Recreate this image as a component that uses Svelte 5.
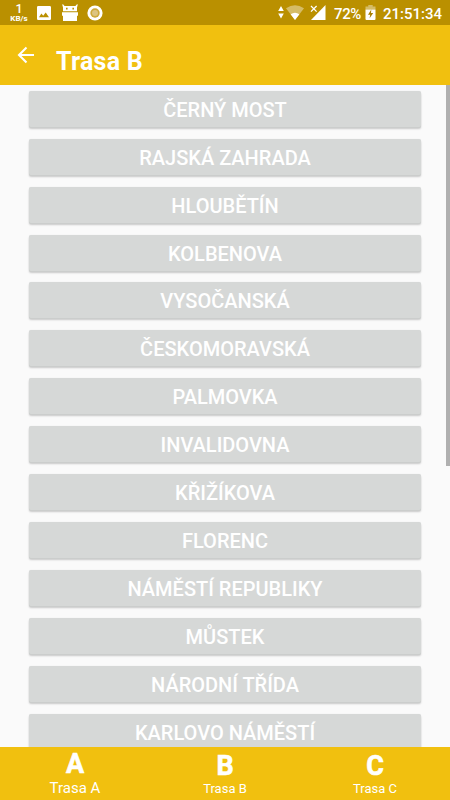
<script>
  const stations = [
    'ČERNÝ MOST', 'RAJSKÁ ZAHRADA', 'HLOUBĚTÍN', 'KOLBENOVA', 'VYSOČANSKÁ',
    'ČESKOMORAVSKÁ', 'PALMOVKA', 'INVALIDOVNA', 'KŘIŽÍKOVA', 'FLORENC',
    'NÁMĚSTÍ REPUBLIKY', 'MŮSTEK', 'NÁRODNÍ TŘÍDA', 'KARLOVO NÁMĚSTÍ'
  ];
  const lines = ['A', 'B', 'C'];
  let active = $state('A');
</script>

<div class="screen">
  <div class="status">
    <div class="speed"><b>1</b><span>KB/s</span></div>
    <svg class="photo" width="14" height="14" viewBox="0 0 14 14">
      <path fill="#fff" fill-rule="evenodd" d="M1.3 0h11.4Q14 0 14 1.3v11.4Q14 14 12.700 14H1.300Q0 14 0 12.700V1.300Q0 0 1.300 0zM2 11.300h10L8.700 6.500 6.200 9.700 4.400 7.600z" />
    </svg>
    <svg class="robot" width="16" height="18" viewBox="0 0 16 18">
      <path fill="#fff" fill-rule="evenodd" d="M1 7.300V3.400L.2.600 1 .2 2.600 2h10.800L15 .2l.8.4L15 3.400v3.900zM4 3.800v1.600h1.600V3.800zm6.400 0v1.600H12V3.800z" />
      <path fill="#fff" d="M0 8.300h16v3.500h-1V17H1v-5.200H0z" />
    </svg>
    <svg class="ring" width="16" height="16" viewBox="0 0 16 16">
      <circle cx="8" cy="8" r="7.600" fill="#fff" />
      <circle cx="8" cy="8" r="4.700" fill="#cda93a" />
      <circle cx="8" cy="8" r="3" fill="#dcc480" />
    </svg>
    <div class="spacer"></div>
    <svg class="arrows" width="6" height="13" viewBox="0 0 6 13">
      <path fill="#fff" d="M3 0l2.800 5H.2zM3 12.500l2.800-5H.2z" />
    </svg>
    <svg class="wifi" width="18" height="15" viewBox="0 0 18 15">
      <path fill="#fff" opacity=".4" d="M0 3.300Q9-3 18 3.300L9 15z" />
      <path fill="#fff" d="M4.600 9.200Q9 6.100 13.400 9.200L9 15z" />
    </svg>
    <svg class="signal" width="16" height="15" viewBox="0 0 16 15">
      <path fill="#fff" d="M15.500 0v15H1z" />
      <path fill="#ba9000" d="M0 0h7.500v7.500H0z" />
      <path stroke="#fff" stroke-width="1.300" d="M1 1l5.600 5.600M6.600 1L1 6.600" />
    </svg>
    <span class="percent">72%</span>
    <svg class="battery" width="11" height="15" viewBox="0 0 11 15">
      <path fill="#fff" opacity=".4" d="M3.300 0h4.400v1.500H10.500V4.500H.5v-3h2.800z" />
      <path fill="#fff" d="M.5 4.500h10V14q0 1-1 1h-8q-1 0-1-1z" />
      <path fill="#a98000" d="M6.300 4.500L3 9.700h2.200l-.6 3.600 3.600-5.400H6z" />
    </svg>
    <span class="clock">21:51:34</span>
  </div>

  <header>
    <svg class="back" width="18" height="18" viewBox="0 0 18 18">
      <path fill="none" stroke="#fff" stroke-width="2.100" d="M9.500 1.500L2 9l7.500 7.500M2 9H17" />
    </svg>
    <h1>Trasa B</h1>
  </header>

  <main>
    <div class="list">
      {#each stations as station}
        <button class="station">{station}</button>
      {/each}
    </div>
    <div class="track"><div class="thumb"></div></div>
  </main>

  <nav>
    {#each lines as line}
      <button class="tab" class:active={active === line} onclick={() => (active = line)}>
        <b>{line}</b>
        <span>Trasa {line}</span>
      </button>
    {/each}
  </nav>
</div>

<style>
  .screen {
    width: 450px;
    height: 800px;
    display: flex;
    flex-direction: column;
    overflow: hidden;
    background: #fafafa;
    color: #fff;
    font-family: Roboto, "Liberation Sans", sans-serif;
  }
  button {
    border: 0;
    margin: 0;
    padding: 0;
    color: inherit;
    font-family: inherit;
  }
  svg { flex: none; display: block; }
  .status {
    flex: none;
    box-sizing: border-box;
    height: 25px;
    padding: 0 8px 0 9px;
    display: flex;
    align-items: flex-start;
    background: #ba9000;
  }
  .speed {
    width: 20px;
    padding-top: 4px;
    display: flex;
    flex-direction: column;
    align-items: center;
  }
  .speed b { font-size: 12.500px; font-weight: 500; line-height: 10px; }
  .speed span { font-size: 8px; font-weight: 700; line-height: 9px; }
  .photo { margin: 6px 0 0 8px; }
  .robot { margin: 4px 0 0 11px; }
  .ring { margin: 5px 0 0 9px; }
  .spacer { flex: 1; }
  .arrows { margin-top: 6px; }
  .wifi { margin: 5px 0 0 2px; }
  .signal { margin: 5px 0 0 6px; }
  .percent, .clock {
    font-size: 15px;
    font-weight: 500;
    line-height: 28px;
    white-space: nowrap;
  }
  .percent { width: 28px; margin-left: 8px; letter-spacing: -.4px; }
  .battery { margin: 5px 0 0 3px; }
  .clock { width: 59px; margin-left: 7px; }
  header {
    flex: none;
    height: 60px;
    display: flex;
    background: #f1c00f;
  }
  .back { margin: 21px 0 0 17px; }
  h1 {
    margin: 22px 0 0 21px;
    font-size: 25px;
    line-height: 30px;
    font-weight: 700;
    letter-spacing: .25px;
  }
  main {
    flex: 1;
    min-height: 0;
    display: flex;
    overflow: hidden;
  }
  .list {
    flex: 1;
    padding: 5.700px 25px 0 29px;
    display: flex;
    flex-direction: column;
    gap: 11.950px;
  }
  .station {
    flex: none;
    height: 36px;
    border-radius: 2px;
    background: #d6d8d7;
    box-shadow: 0 1px 0 #cbcdcc, 0 2px 2px rgba(0, 0, 0, .2), 0 0 1px rgba(0, 0, 0, .12);
    font-size: 20px;
    font-weight: 500;
    line-height: 38px;
  }
  .track { flex: none; width: 4px; }
  .thumb { height: 381px; background: #b0b0b0; }
  nav {
    flex: none;
    height: 53px;
    display: flex;
    background: #f1c00f;
  }
  .tab {
    flex: 1;
    padding-top: 4px;
    display: flex;
    flex-direction: column;
    align-items: center;
    background: none;
  }
  .tab b {
    font-size: 27px;
    line-height: 30px;
    font-weight: 700;
    -webkit-text-stroke: .6px #fff;
  }
  .tab span { font-size: 13px; line-height: 15px; }
  .tab.active { padding-top: 2px; }
  .tab.active span { font-size: 15px; line-height: 18px; }
</style>
